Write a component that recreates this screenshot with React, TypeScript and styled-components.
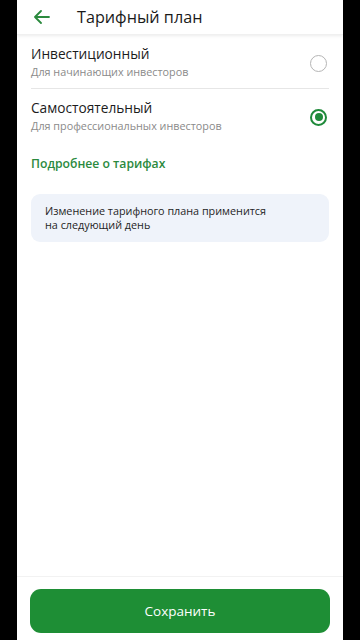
import React, { useState } from "react";
import styled, { createGlobalStyle } from "styled-components";

const Global = createGlobalStyle`
  html, body { margin: 0; padding: 0; background: #000; }
  body { font-family: "Open Sans", "Noto Sans", sans-serif; }
  * { box-sizing: border-box; }
`;

const Screen = styled.div`
  width: 326px;
  height: 640px;
  margin: 0 17px;
  background: #fff;
  display: flex;
  flex-direction: column;
`;

const Header = styled.header`
  height: 35px;
  display: flex;
  align-items: center;
  padding-left: 14px;
  box-shadow: 0 1px 3px rgba(0, 0, 0, 0.08);
  border-bottom: 1px solid #f0f0f0;
`;

const BackButton = styled.button`
  width: 22px;
  height: 22px;
  border: 0;
  padding: 0;
  background: none;
  display: flex;
  align-items: center;
  justify-content: center;
  margin-right: 24px;
`;

const Title = styled.h1`
  margin: 0;
  font-size: 16.2px;
  font-weight: 400;
  color: #1a1a1a;
`;

const Content = styled.main`
  flex: 1;
  padding: 0 14px;
  display: flex;
  flex-direction: column;
`;

const Row = styled.label<{ $last?: boolean }>`
  display: flex;
  align-items: center;
  padding: 10px 0 7px;
  border-bottom: ${(p) => (p.$last ? "none" : "1px solid #e6e6e6")};
  cursor: pointer;
`;

const RowText = styled.div`
  flex: 1;
  display: flex;
  flex-direction: column;
`;

const RowTitle = styled.span`
  font-size: 13.7px;
  line-height: 18px;
  color: #1c1c1c;
`;

const RowSub = styled.span`
  font-size: 10.8px;
  line-height: 18px;
  color: #8a8a8a;
`;

const Radio = styled.span<{ $checked: boolean }>`
  width: 17px;
  height: 17px;
  border-radius: 50%;
  margin-right: 2px;
  border: ${(p) => (p.$checked ? "2px solid #1f8a3a" : "1.5px solid #b5b5b5")};
  display: flex;
  align-items: center;
  justify-content: center;
  &::after {
    content: "";
    width: 8px;
    height: 8px;
    border-radius: 50%;
    background: ${(p) => (p.$checked ? "#1f8a3a" : "transparent")};
  }
`;

const MoreLink = styled.a`
  margin-top: 13px;
  font-size: 12.2px;
  line-height: 18px;
  font-weight: 600;
  color: #2b8a3e;
  text-decoration: none;
`;

const Info = styled.div`
  margin-top: 21px;
  background: #eff3fa;
  border-radius: 9px;
  padding: 10px 14px 10px;
  font-size: 10.8px;
  line-height: 14px;
  color: #1f1f1f;
`;

const Footer = styled.footer`
  border-top: 1px solid #f2f2f2;
  padding: 12px 13px 7px;
`;

const SaveButton = styled.button`
  width: 100%;
  height: 44px;
  border: 0;
  border-radius: 11px;
  background: #1e8e35;
  color: #fff;
  font-family: "Open Sans", "Noto Sans", sans-serif;
  font-size: 13.5px;
`;

const plans = [
  { id: "inv", title: "Инвестиционный", sub: "Для начинающих инвесторов" },
  { id: "self", title: "Самостоятельный", sub: "Для профессиональных инвесторов" },
];

export default function App() {
  const [selected, setSelected] = useState("self");
  return (
    <>
      <Global />
      <Screen>
        <Header>
          <BackButton aria-label="Назад">
            <svg width="16" height="14" viewBox="0 0 16 14" fill="none">
              <path d="M15 7H1.5M7 1L1 7l6 6" stroke="#2b8a3e" strokeWidth="1.8" strokeLinecap="round" strokeLinejoin="round" />
            </svg>
          </BackButton>
          <Title>Тарифный план</Title>
        </Header>
        <Content>
          {plans.map((p, i) => (
            <Row key={p.id} $last={i === plans.length - 1} onClick={() => setSelected(p.id)}>
              <RowText>
                <RowTitle>{p.title}</RowTitle>
                <RowSub>{p.sub}</RowSub>
              </RowText>
              <Radio $checked={selected === p.id} />
            </Row>
          ))}
          <MoreLink href="#">Подробнее о тарифах</MoreLink>
          <Info>
            Изменение тарифного плана применится
            <br />
            на следующий день
          </Info>
        </Content>
        <Footer>
          <SaveButton>Сохранить</SaveButton>
        </Footer>
      </Screen>
    </>
  );
}
